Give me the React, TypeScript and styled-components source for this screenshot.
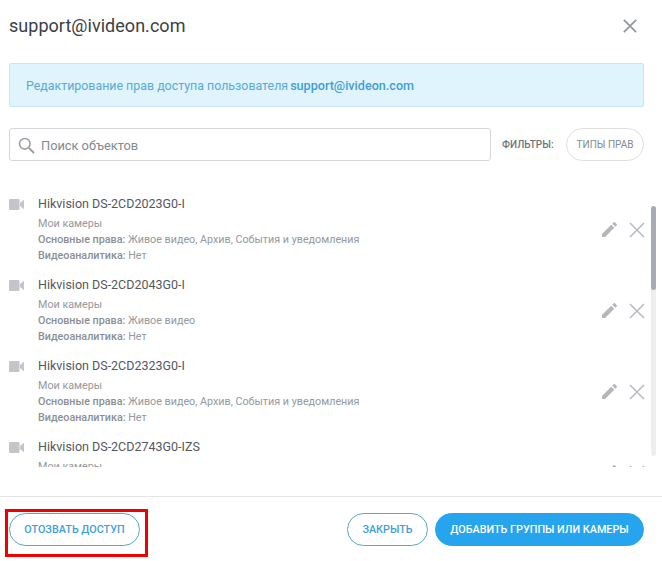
import React from 'react';
import styled, { createGlobalStyle } from 'styled-components';

const GlobalStyle = createGlobalStyle`
  html, body {
    margin: 0;
    padding: 0;
    background: #fff;
  }
  * {
    box-sizing: border-box;
  }
`;

const Dialog = styled.div`
  position: relative;
  width: 662px;
  height: 561px;
  overflow: hidden;
  display: flex;
  flex-direction: column;
  background: #fff;
  font-family: Roboto, "Liberation Sans", sans-serif;
`;

const Header = styled.header`
  height: 63px;
  padding: 0 25px 11px 9px;
  display: flex;
  align-items: center;
  justify-content: space-between;
`;

const Title = styled.h1`
  margin: 0 0 2px;
  font-size: 18px;
  font-weight: 400;
  letter-spacing: 0.03px;
  color: #3b4045;
`;

const Notice = styled.div`
  height: 44px;
  margin: 0 18px 0 9px;
  padding-left: 16px;
  display: flex;
  align-items: center;
  gap: 2px;
  font-size: 12.4px;
  color: #5aa9d6;
  background: #dff4fd;
  border: 1px solid #c5e6f3;
  border-radius: 2px;

  b {
    font-size: 12.6px;
    font-weight: 500;
    color: #3f9fd6;
  }
`;

const SearchRow = styled.div`
  height: 33px;
  margin: 21px 18px 0 9px;
  display: flex;
  align-items: center;
`;

const SearchBox = styled.div`
  width: 482px;
  height: 33px;
  padding: 1px 0 0 8px;
  display: flex;
  align-items: center;
  gap: 6px;
  font-size: 12.8px;
  color: #84898f;
  border: 1px solid #d5d7da;
  border-radius: 3px;
`;

const FilterLabel = styled.span`
  margin-left: 11px;
  font-size: 10px;
  font-weight: 500;
  letter-spacing: 0.05px;
  color: #6f747a;
`;

const FilterButton = styled.button`
  width: 78px;
  height: 33px;
  margin-left: auto;
  padding: 0;
  font-family: inherit;
  font-size: 10px;
  font-weight: 400;
  color: #84898f;
  background: #fff;
  border: 1px solid #dcdee0;
  border-radius: 17px;
`;

const ListArea = styled.div`
  position: relative;
  height: 335px;
`;

const List = styled.div`
  height: 306px;
  overflow: hidden;
  padding: 33px 0 0 9px;
  display: flex;
  flex-direction: column;
`;

const Row = styled.div`
  height: 81px;
  flex: none;
  padding-right: 17px;
  display: flex;
`;

const RowIcon = styled.div`
  width: 29px;
  padding-top: 5px;
  flex: none;

  svg {
    display: block;
  }
`;

const RowBody = styled.div`
  flex: 1;
  min-width: 0;
`;

const RowTitle = styled.div`
  height: 22px;
  line-height: 20px;
  font-size: 12.5px;
  color: #53585e;
`;

const RowLine = styled.div`
  height: 16px;
  line-height: 16px;
  font-size: 10.75px;
  color: #94999e;

  b {
    font-weight: 500;
    color: #8a8f95;
  }
`;

const RowActions = styled.div`
  height: 60px;
  padding: 11px 0 0 0;
  display: flex;
  align-items: center;
  gap: 12px;
`;

const ScrollTrack = styled.div`
  position: absolute;
  top: 45px;
  right: 6px;
  width: 5px;
  height: 250px;
  border-radius: 3px;
  background: #eeeeef;
`;

const ScrollThumb = styled.div`
  height: 84px;
  border-radius: 3px;
  background: #a9abb2;
`;

const Footer = styled.footer`
  flex: 1;
  padding: 0 18px 0 9px;
  display: flex;
  align-items: center;
  gap: 7px;
  border-top: 1px solid #e4e5e7;
`;

const Button = styled.button<{ $primary?: boolean; $push?: boolean; $width: number }>`
  width: ${(p) => p.$width}px;
  height: 33px;
  padding: 0;
  margin-left: ${(p) => (p.$push ? 'auto' : '0')};
  font-family: inherit;
  font-size: 10.8px;
  font-weight: 500;
  color: ${(p) => (p.$primary ? '#fff' : '#3f9fd6')};
  background: ${(p) => (p.$primary ? '#27a4ee' : '#fff')};
  border: 1px solid ${(p) => (p.$primary ? '#27a4ee' : '#5ba6c4')};
  border-radius: 17px;
`;

const Highlight = styled.div`
  position: absolute;
  left: 5px;
  top: 509px;
  width: 143px;
  height: 48px;
  border: 3px solid #f00000;
`;

const CloseIcon = ({ size, color, weight }: { size: number; color: string; weight: number }) => (
  <svg width={size} height={size} viewBox="0 0 16 16">
    <path d="M1 1 15 15M15 1 1 15" stroke={color} strokeWidth={weight} fill="none" />
  </svg>
);

const SearchIcon = () => (
  <svg width="17" height="17" viewBox="0 0 17 17">
    <circle cx="6.8" cy="6.8" r="5.3" stroke="#999da2" strokeWidth="1.6" fill="none" />
    <path d="M10.8 10.8 16 16" stroke="#999da2" strokeWidth="1.9" fill="none" />
  </svg>
);

const CameraIcon = () => (
  <svg width="15" height="11" viewBox="0 0 15 11">
    <rect x="0" y="0" width="10.5" height="11" rx="1" fill="#c2c5c9" />
    <path d="M11 4 15 .8V10.2L11 7Z" fill="#c2c5c9" />
  </svg>
);

const PencilIcon = () => (
  <svg width="15" height="15" viewBox="0 0 16 16">
    <path
      d="M0 16V12.7L9.8 2.9 13.1 6.2 3.3 16ZM10.9 1.8 12.3.4C12.8-.1 13.5-.1 14 .4L15.6 2C16.1 2.5 16.1 3.2 15.6 3.7L14.2 5.1Z"
      fill="#b3b6ba"
    />
  </svg>
);

const cameras = [
  { name: 'Hikvision DS-2CD2023G0-I', rights: 'Живое видео, Архив, События и уведомления' },
  { name: 'Hikvision DS-2CD2043G0-I', rights: 'Живое видео' },
  { name: 'Hikvision DS-2CD2323G0-I', rights: 'Живое видео, Архив, События и уведомления' },
  { name: 'Hikvision DS-2CD2743G0-IZS', rights: 'Живое видео' },
];

const App: React.FC = () => {
  return (
    <Dialog>
      <GlobalStyle />
      <Header>
        <Title>support@ivideon.com</Title>
        <CloseIcon size={14} color="#93979c" weight={2} />
      </Header>
      <Notice>
        Редактирование прав доступа пользователя <b>support@ivideon.com</b>
      </Notice>
      <SearchRow>
        <SearchBox>
          <SearchIcon />
          Поиск объектов
        </SearchBox>
        <FilterLabel>ФИЛЬТРЫ:</FilterLabel>
        <FilterButton>ТИПЫ ПРАВ</FilterButton>
      </SearchRow>
      <ListArea>
        <List>
          {cameras.map((cam) => (
            <Row key={cam.name}>
              <RowIcon>
                <CameraIcon />
              </RowIcon>
              <RowBody>
                <RowTitle>{cam.name}</RowTitle>
                <RowLine>Мои камеры</RowLine>
                <RowLine>
                  <b>Основные права:</b> {cam.rights}
                </RowLine>
                <RowLine>
                  <b>Видеоаналитика:</b> Нет
                </RowLine>
              </RowBody>
              <RowActions>
                <PencilIcon />
                <CloseIcon size={16} color="#b9bcc0" weight={1.6} />
              </RowActions>
            </Row>
          ))}
        </List>
        <ScrollTrack>
          <ScrollThumb />
        </ScrollTrack>
      </ListArea>
      <Footer>
        <Button $width={131}>ОТОЗВАТЬ ДОСТУП</Button>
        <Button $push $width={81}>
          ЗАКРЫТЬ
        </Button>
        <Button $primary $width={209}>
          ДОБАВИТЬ ГРУППЫ ИЛИ КАМЕРЫ
        </Button>
      </Footer>
      <Highlight />
    </Dialog>
  );
};

export default App;
